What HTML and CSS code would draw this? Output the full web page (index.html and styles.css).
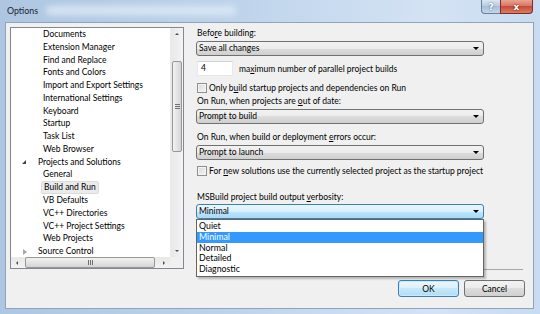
FILE: index.html
```html
<!DOCTYPE html>
<html lang="en">
<head>
  <meta charset="UTF-8" />
  <title>Options</title>
  <link rel="stylesheet" href="styles.css">
</head>
<body>
  <div class="window">
    <div class="titlebar">
      <span class="title">Options</span>
      <span class="smudge"></span>
      <div class="caption">
        <span class="cap-btn help">?</span>
        <span class="cap-btn close">x</span>
      </div>
    </div>

    <div class="client">
      <div class="main">
        <div class="tree">
          <ul class="nodes">
            <li class="child">Documents</li>
            <li class="child">Extension Manager</li>
            <li class="child">Find and Replace</li>
            <li class="child">Fonts and Colors</li>
            <li class="child">Import and Export Settings</li>
            <li class="child">International Settings</li>
            <li class="child">Keyboard</li>
            <li class="child">Startup</li>
            <li class="child">Task List</li>
            <li class="child">Web Browser</li>
            <li class="parent open"><span class="twisty"></span>Projects and Solutions</li>
            <li class="child">General</li>
            <li class="child"><span class="selected">Build and Run</span></li>
            <li class="child">VB Defaults</li>
            <li class="child">VC++ Directories</li>
            <li class="child">VC++ Project Settings</li>
            <li class="child">Web Projects</li>
            <li class="parent"><span class="twisty"></span>Source Control</li>
          </ul>
          <div class="vscroll">
            <span class="arrow up"></span>
            <div class="vtrack"><span class="vthumb"><span class="grip"></span></span></div>
            <span class="arrow down"></span>
          </div>
          <div class="hscroll">
            <span class="arrow left"></span>
            <div class="htrack"><span class="hthumb"><span class="grip"></span></span></div>
            <span class="arrow right"></span>
          </div>
          <div class="corner"></div>
        </div>

        <div class="page">
          <label class="caption-label">Befo<u>r</u>e building:</label>
          <div class="combo first">Save all changes</div>

          <div class="spin-row">
            <span class="textbox">4</span>
            <span>ma<u>x</u>imum number of parallel project builds</span>
          </div>

          <div class="check-row r1">
            <span class="check"></span>
            <span>Only b<u>u</u>ild startup projects and dependencies on Run</span>
          </div>

          <label class="caption-label l2">On Run, when projects are <u>o</u>ut of date:</label>
          <div class="combo">Prompt to build</div>

          <label class="caption-label l3">On Run, when build or deployment <u>e</u>rrors occur:</label>
          <div class="combo">Prompt to launch</div>

          <div class="check-row r2">
            <span class="check"></span>
            <span>For <u>n</u>ew solutions use the currently selected project as the startup project</span>
          </div>

          <label class="caption-label l4">MSBuild project build output <u>v</u>erbosity:</label>
          <div class="combo focused">
            Minimal
            <ul class="dropdown">
              <li>Quiet</li>
              <li class="hot">Minimal</li>
              <li>Normal</li>
              <li>Detailed</li>
              <li>Diagnostic</li>
            </ul>
          </div>
        </div>
      </div>

      <div class="buttons">
        <button class="btn default">OK</button>
        <button class="btn">Cancel</button>
      </div>
    </div>
  </div>
</body>
</html>
```

FILE: styles.css
```css
* {
  box-sizing: border-box;
}
body {
  margin: 0;
  font-family: Lato, "Open Sans", sans-serif;
  font-size: 8.5px;
  color: #000;
  background: #fff;
}
ul {
  list-style: none;
  margin: 0;
  padding: 0;
}

/* window frame */
.window {
  width: 540px;
  height: 314px;
  display: flex;
  flex-direction: column;
  padding: 0 6px 5px 5px;
  background: linear-gradient(to right, #aec6e1, #bcd2ea 40%, #d4e3f4 80%, #c8dbf0);
}
.titlebar {
  height: 22px;
  display: flex;
  align-items: flex-start;
  position: relative;
}
.title {
  margin: 5px 0 0 2px;
  font-size: 8.8px;
  color: #1a2433;
}
.smudge {
  width: 190px;
  height: 9px;
  margin: 6px 0 0 8px;
  border-radius: 5px;
  background: rgba(225, 236, 248, 0.8);
  filter: blur(3px);
}
.caption {
  margin-left: auto;
  margin-right: 1px;
  display: flex;
}
.cap-btn {
  height: 14px;
  display: flex;
  align-items: center;
  justify-content: center;
  border: 1px solid #6b7f98;
  border-top: none;
  font-family: "DejaVu Sans", sans-serif;
  font-size: 9px;
  font-weight: bold;
}
.help {
  width: 19px;
  border-radius: 0 0 0 4px;
  border-right: none;
  background: linear-gradient(#dbe6f3, #b6c9e0 50%, #a9bfd9 50%, #c3d6ec);
  color: #fff;
  text-shadow: 0 0 2px #3a5270;
}
.close {
  width: 33px;
  border-radius: 0 0 4px 0;
  border-color: #7a2d2a;
  background: linear-gradient(#e8a493, #d9705e 50%, #c84a37 50%, #d77f66);
  color: #fff;
  text-shadow: 0 0 2px #5a0f08;
}

/* client area */
.client {
  flex: 1;
  display: flex;
  flex-direction: column;
  padding: 4px 8px 0 4px;
  background: #f0f0f0;
  border: 1px solid #8fa4bc;
}
.main {
  display: flex;
  gap: 12px;
  height: 243px;
}

/* tree view */
.tree {
  width: 174px;
  height: 242px;
  flex-shrink: 0;
  display: grid;
  grid-template-columns: 1fr 13px;
  grid-template-rows: 1fr 11px;
  background: #fff;
  border: 1px solid #828790;
}
.nodes {
  overflow: hidden;
  line-height: 12.75px;
}
.nodes li {
  white-space: nowrap;
}
.child {
  padding-left: 32px;
}
.parent {
  padding-left: 9px;
  display: flex;
  align-items: center;
}
.twisty {
  width: 9px;
  height: 9px;
  margin-right: 9px;
  position: relative;
}
.parent.open .twisty::after {
  content: "";
  position: absolute;
  left: 2px;
  top: 3px;
  border-style: solid;
  border-width: 0 0 4px 4px;
  border-color: transparent transparent #404040 transparent;
}
.parent:not(.open) .twisty::after {
  content: "";
  position: absolute;
  left: 3px;
  top: 2px;
  border-style: solid;
  border-width: 3px 0 3px 4px;
  border-color: transparent transparent transparent #a6a6a6;
}
.selected {
  display: inline-block;
  margin-left: -2px;
  padding: 0 2px;
  line-height: 11px;
  background: #ebebeb;
  border: 1px solid #dcdcdc;
  border-radius: 2px;
}

/* scrollbars */
.vscroll, .hscroll, .corner {
  background: linear-gradient(to right, #e8e8e8, #f3f3f3);
}
.vscroll {
  display: flex;
  flex-direction: column;
  align-items: center;
  border-left: 1px solid #eaeaea;
}
.hscroll {
  display: flex;
  align-items: center;
  background: linear-gradient(#e8e8e8, #f3f3f3);
}
.corner {
  background: #f0f0f0;
}
.arrow {
  width: 12px;
  height: 12px;
  flex-shrink: 0;
  position: relative;
}
.arrow::after {
  content: "";
  position: absolute;
  border-style: solid;
}
.arrow.up::after {
  left: 4px; top: 5px;
  border-width: 0 2px 2px 2px;
  border-color: transparent transparent #4d4d4d transparent;
}
.arrow.down::after {
  left: 4px; top: 5px;
  border-width: 2px 2px 0 2px;
  border-color: #4d4d4d transparent transparent transparent;
}
.arrow.left::after {
  left: 5px; top: 4px;
  border-width: 2px 2px 2px 0;
  border-color: transparent #4d4d4d transparent transparent;
}
.arrow.right::after {
  left: 5px; top: 4px;
  border-width: 2px 0 2px 2px;
  border-color: transparent transparent transparent #4d4d4d;
}
.vtrack {
  flex: 1;
  width: 100%;
  padding-top: 21px;
}
.vthumb {
  display: flex;
  align-items: center;
  justify-content: center;
  height: 91px;
  margin: 0 1px;
  border: 1px solid #979797;
  border-radius: 2px;
  background: linear-gradient(to right, #f2f2f2, #e4e4e4 50%, #d4d4d4);
}
.vthumb .grip {
  width: 5px;
  height: 5px;
  background: repeating-linear-gradient(#707070 0 1px, transparent 1px 2px);
}
.htrack {
  flex: 1;
  height: 100%;
  padding-left: 2px;
  padding-right: 3px;
}
.hthumb {
  display: flex;
  align-items: center;
  justify-content: center;
  height: 100%;
  width: 130px;
  border: 1px solid #979797;
  border-radius: 2px;
  background: linear-gradient(#f2f2f2, #e4e4e4 50%, #d4d4d4);
}
.hthumb .grip {
  width: 5px;
  height: 5px;
  background: repeating-linear-gradient(to right, #707070 0 1px, transparent 1px 2px);
}

/* options page */
.page {
  flex: 1;
  display: flex;
  flex-direction: column;
  align-items: flex-start;
  margin-right: 2px;
  border-bottom: 1px solid #a8a8a8;
}
.caption-label {
  line-height: 12px;
  padding-left: 1px;
}
.combo {
  position: relative;
  width: 288px;
  height: 15px;
  margin-top: 2px;
  padding-left: 2px;
  line-height: 13px;
  border: 1px solid #707070;
  border-radius: 3px;
  background: linear-gradient(#f2f2f2, #ebebeb 50%, #dddddd 50%, #cfcfcf);
}
.combo::after {
  content: "";
  position: absolute;
  right: 4px;
  top: 5px;
  border-style: solid;
  border-width: 3px 3px 0 3px;
  border-color: #000 transparent transparent transparent;
}
.combo.focused {
  margin-top: 1px;
  border-color: #3c7fb1;
  background: linear-gradient(#eaf6fd, #d9f0fc 50%, #bee6fd 50%, #a7d9f5);
}
.spin-row {
  display: flex;
  align-items: center;
  gap: 6px;
  margin-top: 5px;
  height: 15px;
  padding-left: 1px;
}
.textbox {
  width: 36px;
  height: 15px;
  padding-left: 3px;
  line-height: 13px;
  background: #fff;
  border: 1px solid #e3e9ef;
  border-top-color: #cfd3da;
}
.check-row {
  display: flex;
  align-items: center;
  gap: 2px;
  height: 12px;
  padding-left: 1px;
}
.check-row.r1 {
  margin-top: 6px;
}
.check-row.r2 {
  margin-top: 5px;
}
.check {
  width: 10px;
  height: 10px;
  border: 1px solid #8e8f8f;
  background: linear-gradient(135deg, #d8d8d8, #f6f6f6);
  box-shadow: inset 0 0 0 1px #f4f4f4;
}
.l2 {
  margin-top: 1px;
}
.l3 {
  margin-top: 7px;
}
.l4 {
  margin-top: 14px;
}

/* open drop-down list */
.dropdown {
  position: absolute;
  left: -1px;
  top: 14px;
  width: 288px;
  padding: 1px 0;
  font-size: 8.8px;
  background: #fff;
  border: 1px solid #646464;
  box-shadow: 2px 2px 2px rgba(0, 0, 0, 0.25);
  z-index: 2;
}
.dropdown li {
  height: 10.8px;
  line-height: 10.8px;
  padding-left: 2px;
}
.dropdown li.hot {
  background: #3399ff;
  color: #fff;
}

/* dialog buttons */
.buttons {
  display: flex;
  justify-content: flex-end;
  gap: 5px;
  margin-top: 10px;
}
.btn {
  width: 61px;
  height: 17px;
  padding: 0;
  font-family: inherit;
  font-size: 8.5px;
  color: #000;
  border: 1px solid #707070;
  border-radius: 3px;
  background: linear-gradient(#f2f2f2, #ebebeb 50%, #dddddd 50%, #cfcfcf);
}
.btn.default {
  border-color: #3c7fb1;
  box-shadow: inset 0 0 0 1px #c8eafb;
  background: linear-gradient(#ecf7fd, #dcf0fb 50%, #c6e8fa 50%, #b2dcf3);
}
```
